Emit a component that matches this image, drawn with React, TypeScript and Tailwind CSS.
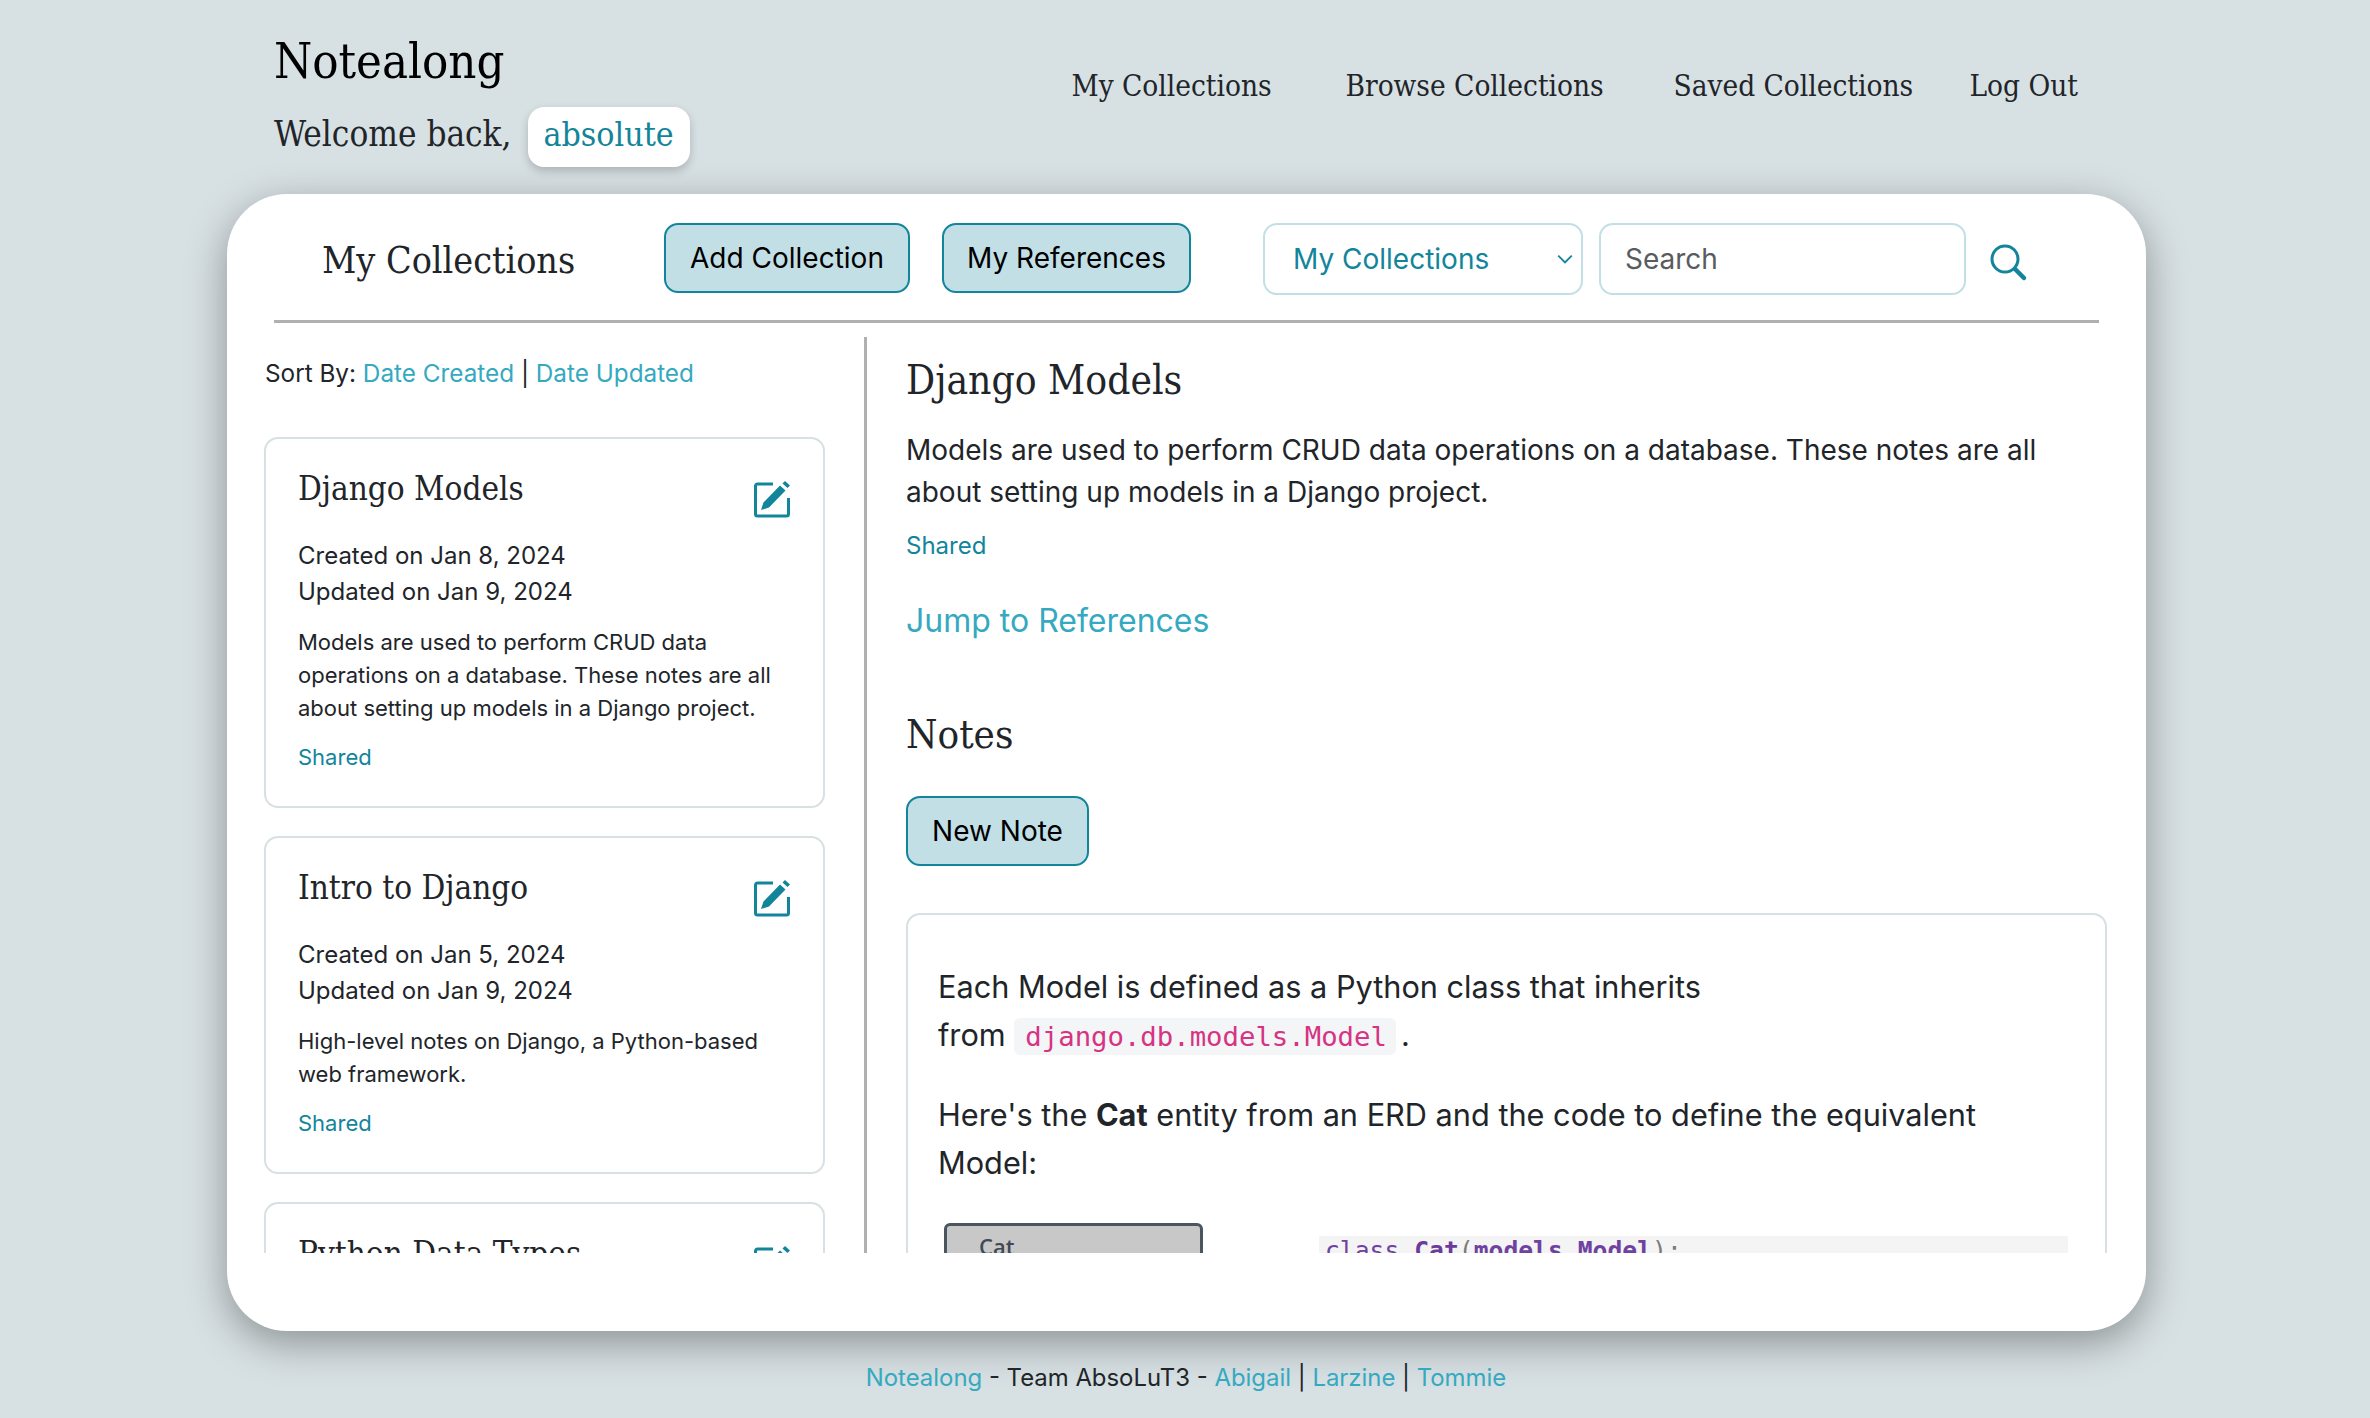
import React from 'react';

const serif = 'font-["DejaVu_Serif_Condensed","Liberation_Serif",serif]';
const mono = 'font-["DejaVu_Sans_Mono",monospace]';

interface Collection {
    title: string;
    created: string;
    updated: string;
    description: string;
}

const collections: Collection[] = [
    {
        title: 'Django Models',
        created: 'Jan 8, 2024',
        updated: 'Jan 9, 2024',
        description: 'Models are used to perform CRUD data operations on a database. These notes are all about setting up models in a Django project.',
    },
    {
        title: 'Intro to Django',
        created: 'Jan 5, 2024',
        updated: 'Jan 9, 2024',
        description: 'High-level notes on Django, a Python-based web framework.',
    },
    {
        title: 'Python Data Types',
        created: 'Jan 3, 2024',
        updated: 'Jan 4, 2024',
        description: 'Notes on data types in Python.',
    },
];

const EditIcon = () => (
    <svg viewBox="0 0 38 38" className="w-[38px] h-[38px] shrink-0" fill="none">
        <path d="M20 3H4.5a2 2 0 0 0-2 2v28a2 2 0 0 0 2 2h29a2 2 0 0 0 2-2V17" stroke="#12859b" strokeWidth="3" />
        <path d="M8 29 10.5 21.5 27 4.5 32.5 9.5 16 26.5Z" fill="#12859b" />
        <path d="M29.5 2.5 32 0 37 4.5 34.5 7Z" fill="#12859b" />
    </svg>
);

const SearchIcon = () => (
    <svg viewBox="0 0 40 40" className="w-[40px] h-[40px]" fill="none">
        <circle cx="17" cy="17" r="13" stroke="#12859b" strokeWidth="3" />
        <path d="M27 27 36 36" stroke="#12859b" strokeWidth="4.5" strokeLinecap="round" />
    </svg>
);

const CollectionCard = ({ item }: { item: Collection }) => (
    <div className="border-2 border-[#d7e0e3] rounded-[14px] px-[32px] pt-[28px] pb-[32px] mb-[28px]">
        <div className="flex justify-between items-start">
            <h3 className={`${serif} text-[33px] leading-[44px] text-[#212529]`}>{item.title}</h3>
            <div className="mt-[14px]"><EditIcon /></div>
        </div>
        <p className="mt-[19px] text-[24px] leading-[36px] text-[#212529]">Created on {item.created}</p>
        <p className="text-[24px] leading-[36px] text-[#212529]">Updated on {item.updated}</p>
        <p className="mt-[16px] text-[22px] leading-[33px] text-[#212529]">{item.description}</p>
        <p className="mt-[16px] text-[22px] leading-[33px] text-[#12859b]">Shared</p>
    </div>
);

export default function App() {
    return (
        <div className="h-[1418px] overflow-hidden bg-[#d7e0e3] font-['Inter',sans-serif] text-[#212529]">
            {/* Header */}
            <header className="h-[194px] pl-[274px] pr-[292px] flex justify-between">
                <div className="pt-[30px]">
                    <h1 className={`${serif} text-[48.6px] leading-[62px] text-black`}>Notealong</h1>
                    <div className="flex items-center mt-[15px]">
                        <span className={`${serif} text-[34.8px] leading-[54px] pb-[6px]`}>Welcome back,</span>
                        <span className={`${serif} ml-[16px] bg-white rounded-[16px] px-[16px] h-[60px] leading-[56px] text-[33.6px] text-[#12859b] shadow-[0_4px_10px_rgba(0,0,0,0.2)]`}>absolute</span>
                    </div>
                </div>
                <nav className={`${serif} flex items-start pt-[64px] text-[29.5px] leading-[44px]`}>
                    <a className="w-[274px]">My Collections</a>
                    <a className="w-[328px]">Browse Collections</a>
                    <a className="w-[296px]">Saved Collections</a>
                    <a>Log Out</a>
                </nav>
            </header>

            {/* Main card */}
            <main className="ml-[227px] w-[1919px] h-[1137px] bg-white rounded-[60px] shadow-[0_12px_40px_rgba(0,0,0,0.35)] px-[37px]">
                <div className="h-[129px] mx-[10px] border-b-[3px] border-[#b0b0b0] flex items-start pt-[29px]">
                    <h2 className={`${serif} ml-[48px] w-[342px] text-[37.3px] leading-[74px]`}>My Collections</h2>
                    <button className="w-[246px] h-[70px] bg-[#c2dfe6] border-2 border-[#12859b] rounded-[14px] text-[28px] text-black">Add Collection</button>
                    <button className="ml-[32px] w-[249px] h-[70px] bg-[#c2dfe6] border-2 border-[#12859b] rounded-[14px] text-[28px] text-black">My References</button>
                    <div className="ml-[72px] w-[320px] h-[72px] border-2 border-[#c2dfe6] rounded-[14px] flex items-center justify-between pl-[28px] pr-[7px] text-[28px] text-[#12859b]">
                        <span>My Collections</span>
                        <svg viewBox="0 0 16 16" className="w-[18px] h-[18px]" fill="none" stroke="#12859b" strokeWidth="1.6"><path d="M2 5l6 6 6-6" /></svg>
                    </div>
                    <div className="ml-[16px] w-[367px] h-[72px] border-2 border-[#c2dfe6] rounded-[14px] flex items-center pl-[24px] text-[28px] text-[#595c5f]">Search</div>
                    <div className="ml-[22px] mt-[19px]"><SearchIcon /></div>
                </div>

                <div className="flex h-[930px] pt-[14px]">
                    {/* Left column */}
                    <div className="w-[603px] h-full overflow-hidden border-r-[3px] border-[#b0b0b0] pr-[39px]">
                        <p className="ml-[1px] text-[24.3px] leading-[36px] mt-[18px] mb-[46px]">
                            Sort By: <a className="text-[#35a9c0]">Date Created</a> | <a className="text-[#35a9c0]">Date Updated</a>
                        </p>
                        {collections.map((item) => (
                            <CollectionCard key={item.title} item={item} />
                        ))}
                    </div>

                    {/* Right column */}
                    <div className="flex-1 h-full overflow-hidden pl-[39px] pr-[2px]">
                        <h2 className={`${serif} text-[40.4px] leading-[56px] mt-[15px]`}>Django Models</h2>
                        <p className="mt-[21px] text-[28px] leading-[42px]">Models are used to perform CRUD data operations on a database. These notes are all about setting up models in a Django project.</p>
                        <p className="mt-[15px] text-[24px] leading-[36px] text-[#12859b]">Shared</p>
                        <p className="mt-[33px] text-[32px] leading-[48px] text-[#35a9c0]">Jump to References</p>
                        <h2 className={`${serif} text-[40px] leading-[56px] mt-[61px]`}>Notes</h2>
                        <button className="mt-[34px] w-[183px] h-[70px] bg-[#c2dfe6] border-2 border-[#12859b] rounded-[14px] text-[28px] text-black">New Note</button>
                        <div className="mt-[47px] border-2 border-[#d7e0e3] rounded-[14px] px-[30px] pt-[48px] h-[600px]">
                            <p className="text-[30.7px] leading-[48px]">Each Model is defined as a Python class that inherits</p>
                            <p className="text-[30.7px] leading-[48px]">
                                from <code className={`${mono} text-[27.3px] text-[#d63384] bg-[#f3f5f6] rounded-[6px] pl-[11px] pr-[9px] py-[3px] mr-[5px]`}>django.db.models.Model</code>.
                            </p>
                            <p className="mt-[30px] text-[30.7px] leading-[48px]">Here's the <b>Cat</b> entity from an ERD and the code to define the equivalent Model:</p>
                            <div className="flex items-start mt-[36px]">
                                <div className="ml-[6px] w-[259px] h-[200px] bg-[#c8c8c8] border-[3px] border-[#4a5560] rounded-[6px] pl-[32px] pt-[4px] font-['Open_Sans',sans-serif] text-[22px] font-semibold text-[#3f4a54]">Cat</div>
                                <pre className={`${mono} ml-[116px] mt-[13px] w-[749px] h-[200px] bg-[#f4f4f4] px-[6px] text-[24.7px] leading-[30px] text-[#6f42a1]`}>
                                    class <b className="text-[#6a3b9b]">Cat</b><span className="text-[#7a7a7a]">(</span><b>models.Model</b><span className="text-[#7a7a7a]">):</span>
                                </pre>
                            </div>
                        </div>
                    </div>
                </div>
            </main>

            {/* Footer */}
            <footer className="h-[87px] pt-[6px] pl-[2px] flex items-center justify-center text-[23.9px]">
                <span>
                    <a className="text-[#35a9c0]">Notealong</a> - Team AbsoLuT3 - <a className="text-[#35a9c0]">Abigail</a> | <a className="text-[#35a9c0]">Larzine</a> | <a className="text-[#35a9c0]">Tommie</a>
                </span>
            </footer>
        </div>
    );
}
